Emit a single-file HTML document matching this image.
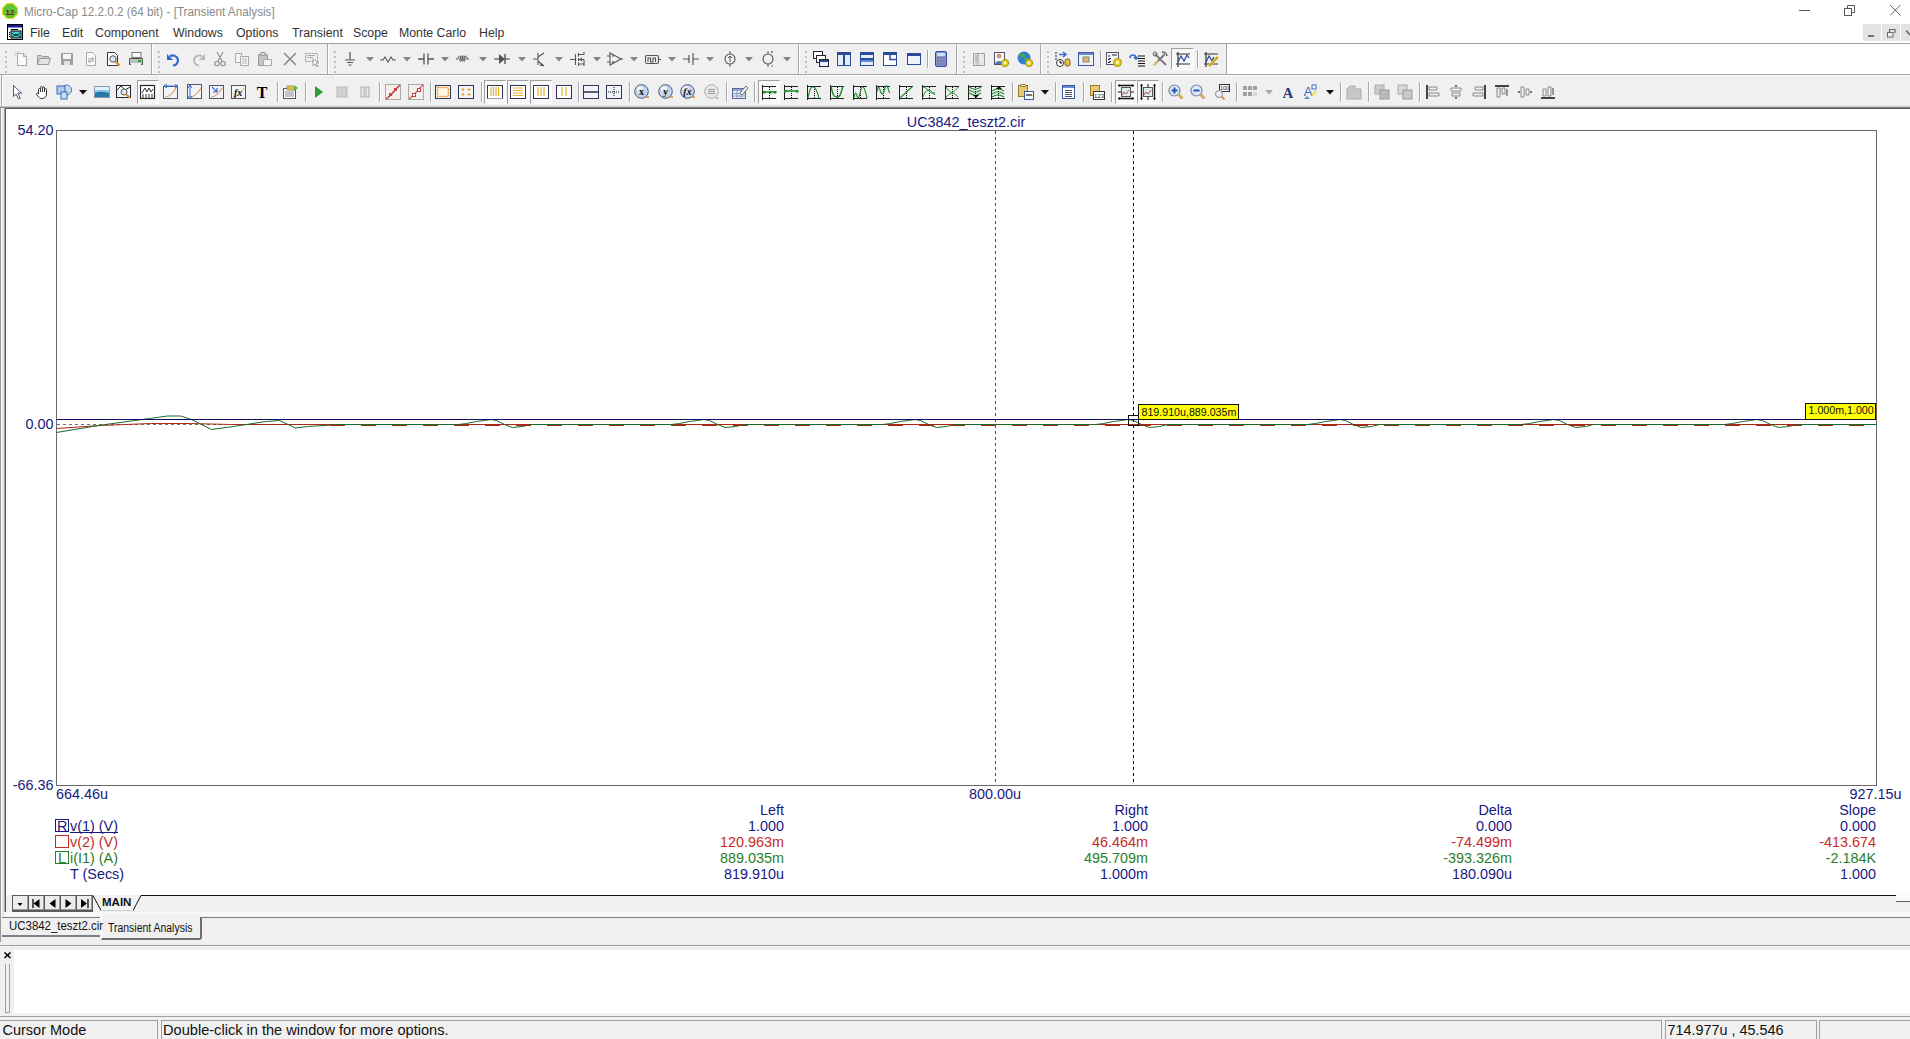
<!DOCTYPE html>
<html><head><meta charset="utf-8"><style>
html,body{margin:0;padding:0;width:1910px;height:1039px;overflow:hidden;background:#fff;position:relative;font-family:"Liberation Sans", sans-serif}
body>div,body>svg{position:absolute}
.t{white-space:nowrap;line-height:1;font-family:"Liberation Sans", sans-serif}
</style></head><body>
<svg style="left:2px;top:3px;" width="16" height="16" viewBox="0 0 16 16"><polygon points="5,0.5 11,0.5 15.5,5 15.5,11 11,15.5 5,15.5 0.5,11 0.5,5" fill="#5ac83a" stroke="#e8d820" stroke-width="1.2"/><text x="8" y="11.5" font-size="8" font-weight="bold" text-anchor="middle" fill="#7a1010" font-family="Liberation Sans">12</text></svg><div class="t" style="left:24px;top:5.59px;font-size:12.3px;color:#8a8a8a;font-weight:normal;transform:scaleX(0.952);transform-origin:0 0">Micro-Cap 12.2.0.2 (64 bit) - [Transient Analysis]</div><div style="left:1799px;top:10px;width:11px;height:1px;background:#5a5a5a"></div><svg style="left:1844px;top:5px;" width="12" height="12" viewBox="0 0 12 12"><rect x="0.5" y="3.5" width="7" height="7" fill="none" stroke="#5a5a5a"/><path d="M3.5 3.5V0.5h7v7h-3" fill="none" stroke="#5a5a5a"/></svg><svg style="left:1890px;top:5px;" width="11" height="11" viewBox="0 0 11 11"><path d="M0 0L10.5 10.5M10.5 0L0 10.5" stroke="#606060" stroke-width="1"/></svg><svg style="left:7px;top:24px;" width="16" height="16" viewBox="0 0 16 16"><rect x="0.5" y="0.5" width="15" height="15" fill="#fff" stroke="#000"/><rect x="1" y="1" width="14" height="2.5" fill="#1a1a9a"/><rect x="4" y="7" width="10" height="7" fill="#40d8d8" stroke="#000"/><path d="M5 9l4 3 4-3M5 13l4-3 4 3" stroke="#000" stroke-width="0.8" fill="none"/><rect x="4" y="5" width="7" height="1" fill="#000"/><rect x="2" y="8" width="1" height="1" fill="#000"/><rect x="2" y="10" width="1" height="1" fill="#000"/><rect x="2" y="12" width="1" height="1" fill="#000"/></svg><div class="t" style="left:30px;top:26.59px;font-size:12.3px;color:#333;font-weight:normal;">File</div><div class="t" style="left:62px;top:26.59px;font-size:12.3px;color:#333;font-weight:normal;">Edit</div><div class="t" style="left:95px;top:26.59px;font-size:12.3px;color:#333;font-weight:normal;">Component</div><div class="t" style="left:173px;top:26.59px;font-size:12.3px;color:#333;font-weight:normal;">Windows</div><div class="t" style="left:236px;top:26.59px;font-size:12.3px;color:#333;font-weight:normal;">Options</div><div class="t" style="left:292px;top:26.59px;font-size:12.3px;color:#333;font-weight:normal;">Transient</div><div class="t" style="left:353px;top:26.59px;font-size:12.3px;color:#333;font-weight:normal;">Scope</div><div class="t" style="left:399px;top:26.59px;font-size:12.3px;color:#333;font-weight:normal;">Monte Carlo</div><div class="t" style="left:479px;top:26.59px;font-size:12.3px;color:#333;font-weight:normal;">Help</div><div style="left:1863px;top:24px;width:18px;height:17px;background:#e3e3e3"></div><div style="left:1882px;top:24px;width:18px;height:17px;background:#e3e3e3"></div><div style="left:1901px;top:24px;width:9px;height:17px;background:#e3e3e3"></div><div style="left:1868px;top:35px;width:6px;height:2px;background:#707070"></div><svg style="left:1887px;top:29px;" width="9" height="9" viewBox="0 0 9 9"><rect x="0.5" y="3.5" width="5.5" height="4.5" fill="#eef" stroke="#6a6a6a"/><path d="M2.5 3V0.5h5.5v3.5" fill="none" stroke="#6a6a6a" stroke-width="1.2"/></svg><svg style="left:1906px;top:30px;" width="4" height="7" viewBox="0 0 4 7"><path d="M0 0.5L4 5" stroke="#6a6a6a" stroke-width="1.5"/></svg><div style="left:0px;top:43px;width:1910px;height:1px;background:#a0a0a0"></div><div style="left:0px;top:44px;width:1227px;height:30px;background:#f0f0f0"></div><div style="left:0px;top:74px;width:1910px;height:1px;background:#a8a8a8"></div><div style="left:0px;top:75px;width:1910px;height:32px;background:#f0f0f0"></div><div style="left:0px;top:75px;width:1910px;height:1px;background:#fafafa"></div><div style="left:0px;top:106px;width:1910px;height:1px;background:#c8c8c8"></div><div style="left:0px;top:107px;width:1910px;height:1px;background:#8a8a8a"></div><div style="left:1226px;top:44px;width:1px;height:30px;background:#a0a0a0"></div><div style="left:5px;top:51px;width:2px;height:2px;background:#c0c0c0"></div><div style="left:5px;top:56px;width:2px;height:2px;background:#c0c0c0"></div><div style="left:5px;top:61px;width:2px;height:2px;background:#c0c0c0"></div><div style="left:5px;top:66px;width:2px;height:2px;background:#c0c0c0"></div><div style="left:5px;top:71px;width:2px;height:2px;background:#c0c0c0"></div><svg style="left:14px;top:51px;" width="16" height="16" viewBox="0 0 16 16"><path d="M3.5 2.5h6l3 3v9h-9z" fill="#fafafa" stroke="#a8a8a8"/><path d="M9.5 2.5v3h3" fill="none" stroke="#a8a8a8"/><path d="M1 1l2 2M4 0v2M0 4h2" stroke="#c0c0c0"/></svg><svg style="left:36px;top:51px;" width="16" height="16" viewBox="0 0 16 16"><path d="M1.5 4.5h4l1 1h6v8h-11z" fill="#d0d0d0" stroke="#9a9a9a"/><path d="M1.5 13.5l2-6h11l-2 6z" fill="#e4e4e4" stroke="#9a9a9a"/></svg><svg style="left:59px;top:51px;" width="16" height="16" viewBox="0 0 16 16"><rect x="2" y="2" width="12" height="12" fill="#a0a0a0"/><rect x="4" y="3" width="8" height="5" fill="#f4f4f4"/><rect x="5" y="10" width="6" height="4" fill="#e0e0e0"/></svg><svg style="left:83px;top:51px;" width="16" height="16" viewBox="0 0 16 16"><path d="M3.5 1.5h6l3 3v10h-9z" fill="#fafafa" stroke="#a8a8a8"/><path d="M5 8h6l-2-2M11 10H5l2 2" fill="none" stroke="#9a9a9a"/></svg><svg style="left:105px;top:51px;" width="16" height="16" viewBox="0 0 16 16"><path d="M2.5 1.5h7l3 3v10h-10z" fill="#fff" stroke="#333"/><circle cx="8" cy="8" r="3.2" fill="#dfe8f4" stroke="#555"/><path d="M10.5 10.5l4 4" stroke="#d08a30" stroke-width="2.2"/></svg><svg style="left:128px;top:51px;" width="16" height="16" viewBox="0 0 16 16"><rect x="4" y="1.5" width="9" height="5" fill="#fff" stroke="#777"/><path d="M1.5 7.5h13v6h-13z" fill="#b8c0c8" stroke="#555"/><rect x="10" y="9" width="3" height="2" fill="#20b020"/><rect x="3" y="12" width="10" height="2" fill="#eee"/></svg><div style="left:151px;top:44px;width:1px;height:30px;background:#a8a8a8"></div><div style="left:152px;top:44px;width:1px;height:30px;background:#ffffff"></div><div style="left:158px;top:51px;width:2px;height:2px;background:#c0c0c0"></div><div style="left:158px;top:56px;width:2px;height:2px;background:#c0c0c0"></div><div style="left:158px;top:61px;width:2px;height:2px;background:#c0c0c0"></div><div style="left:158px;top:66px;width:2px;height:2px;background:#c0c0c0"></div><div style="left:158px;top:71px;width:2px;height:2px;background:#c0c0c0"></div><svg style="left:166px;top:51px;" width="16" height="16" viewBox="0 0 16 16"><path d="M4 5.5a5 5 0 1 1 3 9" fill="none" stroke="#2a6ad0" stroke-width="2.2"/><path d="M1 3v6h6z" fill="#2a6ad0"/></svg><svg style="left:190px;top:51px;" width="16" height="16" viewBox="0 0 16 16"><path d="M12 5.5a5 5 0 1 0 -3 9" fill="none" stroke="#b8b8b8" stroke-width="2"/><path d="M15 3v6h-6z" fill="#b8b8b8"/></svg><svg style="left:212px;top:51px;" width="16" height="16" viewBox="0 0 16 16"><path d="M5 1l5 9M11 1l-5 9" stroke="#9a9a9a" stroke-width="1.3"/><circle cx="5" cy="12.5" r="2.2" fill="none" stroke="#9a9a9a" stroke-width="1.3"/><circle cx="11" cy="12.5" r="2.2" fill="none" stroke="#9a9a9a" stroke-width="1.3"/></svg><svg style="left:234px;top:51px;" width="16" height="16" viewBox="0 0 16 16"><path d="M1.5 2.5h6v9h-6z" fill="#f4f4f4" stroke="#aaa"/><path d="M6.5 5.5h8v9h-8z" fill="#f4f4f4" stroke="#aaa"/><path d="M8 8h5M8 10h5M8 12h5" stroke="#bbb"/></svg><svg style="left:257px;top:51px;" width="16" height="16" viewBox="0 0 16 16"><path d="M1.5 3.5h9v11h-9z" fill="#c4c4c4" stroke="#999"/><rect x="4" y="1.5" width="4" height="3" fill="#ddd" stroke="#999"/><path d="M6.5 8.5h8v6h-8z" fill="#f4f4f4" stroke="#aaa"/></svg><svg style="left:282px;top:51px;" width="16" height="16" viewBox="0 0 16 16"><path d="M2 2l12 12M14 2L2 14" stroke="#8a8a8a" stroke-width="1.6"/></svg><svg style="left:304px;top:51px;" width="16" height="16" viewBox="0 0 16 16"><path d="M1.5 2.5h12v8h-12z" fill="none" stroke="#999" stroke-dasharray="2 1"/><path d="M3 4.5h8M3 6.5h6" stroke="#aaa"/><path d="M9 8v7l2-2 2 3 1-1-2-3h3z" fill="#fff" stroke="#888" stroke-width="0.8"/></svg><div style="left:327px;top:44px;width:1px;height:30px;background:#a8a8a8"></div><div style="left:328px;top:44px;width:1px;height:30px;background:#ffffff"></div><div style="left:334px;top:51px;width:2px;height:2px;background:#c0c0c0"></div><div style="left:334px;top:56px;width:2px;height:2px;background:#c0c0c0"></div><div style="left:334px;top:61px;width:2px;height:2px;background:#c0c0c0"></div><div style="left:334px;top:66px;width:2px;height:2px;background:#c0c0c0"></div><div style="left:334px;top:71px;width:2px;height:2px;background:#c0c0c0"></div><svg style="left:342px;top:51px;" width="16" height="16" viewBox="0 0 16 16"><path d="M8 1v8M3 9h10M5 11.5h6M6.5 14h3" stroke="#555" stroke-width="1.2"/></svg><svg style="left:366px;top:57px;" width="8" height="5" viewBox="0 0 8 5"><path d="M0 0h8L4 4.5z" fill="#888"/></svg><svg style="left:380px;top:51px;" width="16" height="16" viewBox="0 0 16 16"><path d="M0 9h3l2-3 3 5 3-5 2 3h3" fill="none" stroke="#555" stroke-width="1.1"/></svg><svg style="left:403px;top:57px;" width="8" height="5" viewBox="0 0 8 5"><path d="M0 0h8L4 4.5z" fill="#888"/></svg><svg style="left:418px;top:51px;" width="16" height="16" viewBox="0 0 16 16"><path d="M0 8h6M10 8h6M6 2.5v11M10 2.5v11" stroke="#555" stroke-width="1.3"/></svg><svg style="left:441px;top:57px;" width="8" height="5" viewBox="0 0 8 5"><path d="M0 0h8L4 4.5z" fill="#888"/></svg><svg style="left:456px;top:51px;" width="16" height="16" viewBox="0 0 16 16"><path d="M0 8h2c0-4 3-4 3 0s-2 2-1 0c0-4 3-4 3 0s-2 2-1 0c0-4 3-4 3 0s-2 2-1 0c0-4 3-4 3 0h2" fill="none" stroke="#555" stroke-width="1"/></svg><svg style="left:479px;top:57px;" width="8" height="5" viewBox="0 0 8 5"><path d="M0 0h8L4 4.5z" fill="#888"/></svg><svg style="left:494px;top:51px;" width="16" height="16" viewBox="0 0 16 16"><path d="M0 8h16" stroke="#555" stroke-width="1.2"/><path d="M5 3v10l6-5z" fill="#555"/><path d="M11 3v10" stroke="#555" stroke-width="1.4"/></svg><svg style="left:518px;top:57px;" width="8" height="5" viewBox="0 0 8 5"><path d="M0 0h8L4 4.5z" fill="#888"/></svg><svg style="left:532px;top:51px;" width="16" height="16" viewBox="0 0 16 16"><path d="M1 8h5M6 2v12M6 6l6-4M6 10l6 5" stroke="#555" stroke-width="1.1"/><path d="M9 12l3 3-4 0z" fill="#555"/></svg><svg style="left:555px;top:57px;" width="8" height="5" viewBox="0 0 8 5"><path d="M0 0h8L4 4.5z" fill="#888"/></svg><svg style="left:570px;top:51px;" width="16" height="16" viewBox="0 0 16 16"><path d="M0 8.5h5M5.5 3v11M8.5 2v3.5M8.5 7v3M8.5 11.5v3.5M8.5 3.5h5.5M8.5 8.5h5.5M8.5 13h5.5M14 1v2.5M14 13v2M14 8.5v4.5" stroke="#555" stroke-width="1.1"/><path d="M9 8.5l3-2v4z" fill="#555"/></svg><svg style="left:593px;top:57px;" width="8" height="5" viewBox="0 0 8 5"><path d="M0 0h8L4 4.5z" fill="#888"/></svg><svg style="left:607px;top:51px;" width="16" height="16" viewBox="0 0 16 16"><path d="M3 2v12l11-6z" fill="none" stroke="#555" stroke-width="1.1"/><path d="M0 5h3M0 11h3M14 8h2M5 5h2M6 10v2M5 11h2" stroke="#555"/></svg><svg style="left:630px;top:57px;" width="8" height="5" viewBox="0 0 8 5"><path d="M0 0h8L4 4.5z" fill="#888"/></svg><svg style="left:645px;top:51px;" width="16" height="16" viewBox="0 0 16 16"><rect x="0.5" y="4.5" width="13" height="8" rx="1.5" fill="none" stroke="#555" stroke-width="1.1"/><path d="M3 11V7h2.5v4h2.5V7h2.5v4" fill="none" stroke="#555" stroke-width="1.1"/><path d="M13.5 8.5h2.5" stroke="#555"/></svg><svg style="left:668px;top:57px;" width="8" height="5" viewBox="0 0 8 5"><path d="M0 0h8L4 4.5z" fill="#888"/></svg><svg style="left:683px;top:51px;" width="16" height="16" viewBox="0 0 16 16"><path d="M0 8h6M10 8h6M6 4v8M10 2v12" stroke="#555" stroke-width="1.2"/></svg><svg style="left:706px;top:57px;" width="8" height="5" viewBox="0 0 8 5"><path d="M0 0h8L4 4.5z" fill="#888"/></svg><svg style="left:722px;top:51px;" width="16" height="16" viewBox="0 0 16 16"><circle cx="8" cy="8" r="5" fill="none" stroke="#555" stroke-width="1.1"/><path d="M8 0v3M8 13v3M8 11V5M6 7l2-2 2 2" fill="none" stroke="#555"/></svg><svg style="left:745px;top:57px;" width="8" height="5" viewBox="0 0 8 5"><path d="M0 0h8L4 4.5z" fill="#888"/></svg><svg style="left:760px;top:51px;" width="16" height="16" viewBox="0 0 16 16"><circle cx="8" cy="8" r="5" fill="none" stroke="#555" stroke-width="1.1"/><path d="M8 0v3M8 13v3" stroke="#555"/><path d="M11 1h2M12 0v2M11 15h2" stroke="#555" stroke-width="0.8"/></svg><svg style="left:783px;top:57px;" width="8" height="5" viewBox="0 0 8 5"><path d="M0 0h8L4 4.5z" fill="#888"/></svg><div style="left:798px;top:44px;width:1px;height:30px;background:#a8a8a8"></div><div style="left:799px;top:44px;width:1px;height:30px;background:#ffffff"></div><div style="left:805px;top:51px;width:2px;height:2px;background:#c0c0c0"></div><div style="left:805px;top:56px;width:2px;height:2px;background:#c0c0c0"></div><div style="left:805px;top:61px;width:2px;height:2px;background:#c0c0c0"></div><div style="left:805px;top:66px;width:2px;height:2px;background:#c0c0c0"></div><div style="left:805px;top:71px;width:2px;height:2px;background:#c0c0c0"></div><svg style="left:813px;top:51px;" width="16" height="16" viewBox="0 0 16 16"><rect x="0.5" y="0.5" width="9" height="7" fill="#fff" stroke="#223"/><rect x="3.5" y="4.5" width="9" height="7" fill="#fff" stroke="#223"/><rect x="6.5" y="8.5" width="9" height="7" fill="#eef" stroke="#223"/><rect x="7" y="9" width="8" height="2" fill="#2a4a9a"/></svg><svg style="left:836px;top:51px;" width="16" height="16" viewBox="0 0 16 16"><rect x="1.5" y="1.5" width="13" height="13" fill="#e8eef8" stroke="#2a4a9a"/><path d="M8 1.5v13" stroke="#2a4a9a" stroke-width="2"/><rect x="2" y="2" width="12" height="2" fill="#2a4a9a"/></svg><svg style="left:859px;top:51px;" width="16" height="16" viewBox="0 0 16 16"><rect x="1.5" y="1.5" width="13" height="13" fill="#e8eef8" stroke="#2a4a9a"/><path d="M1.5 8h13" stroke="#2a4a9a" stroke-width="2"/><rect x="2" y="2" width="12" height="2" fill="#2a4a9a"/><rect x="2" y="9" width="12" height="2" fill="#5a8ad8"/></svg><svg style="left:882px;top:51px;" width="16" height="16" viewBox="0 0 16 16"><rect x="1.5" y="1.5" width="13" height="13" fill="#fff" stroke="#2a4a9a"/><path d="M8 1.5v7h6.5" fill="none" stroke="#2a4a9a" stroke-width="1.5"/><rect x="2" y="2" width="12" height="2" fill="#2a4a9a"/></svg><svg style="left:906px;top:51px;" width="16" height="16" viewBox="0 0 16 16"><rect x="1.5" y="2.5" width="13" height="11" fill="#eef2fa" stroke="#2a4a9a"/><rect x="2" y="3" width="12" height="2" fill="#2a4a9a"/></svg><div style="left:927px;top:50px;width:1px;height:18px;background:#a8a8a8"></div><div style="left:928px;top:50px;width:1px;height:18px;background:#ffffff"></div><svg style="left:933px;top:51px;" width="16" height="16" viewBox="0 0 16 16"><rect x="2.5" y="0.5" width="11" height="15" rx="1.5" fill="#7a9ad8" stroke="#34a"/><rect x="4" y="2" width="8" height="3" fill="#cde"/><path d="M4.5 7h1M7.5 7h1M10.5 7h1M4.5 10h1M7.5 10h1M10.5 10h1M4.5 13h1M7.5 13h1M10.5 13h1" stroke="#c02020" stroke-width="1.5"/></svg><div style="left:956px;top:44px;width:1px;height:30px;background:#a8a8a8"></div><div style="left:957px;top:44px;width:1px;height:30px;background:#ffffff"></div><div style="left:963px;top:51px;width:2px;height:2px;background:#c0c0c0"></div><div style="left:963px;top:56px;width:2px;height:2px;background:#c0c0c0"></div><div style="left:963px;top:61px;width:2px;height:2px;background:#c0c0c0"></div><div style="left:963px;top:66px;width:2px;height:2px;background:#c0c0c0"></div><div style="left:963px;top:71px;width:2px;height:2px;background:#c0c0c0"></div><svg style="left:971px;top:51px;" width="16" height="16" viewBox="0 0 16 16"><rect x="2.5" y="2.5" width="11" height="12" fill="#e8e8e8" stroke="#a0a0a0"/><path d="M7 2.5v12M4 5h2M4 7h2M4 9h2M4 11h2" stroke="#999"/></svg><svg style="left:993px;top:51px;" width="16" height="16" viewBox="0 0 16 16"><rect x="1.5" y="1.5" width="10" height="12" fill="#fff" stroke="#556"/><circle cx="6" cy="5" r="2.5" fill="#c9a07a"/><path d="M2 13c0-4 8-4 8 0" fill="#5577bb"/><circle cx="12" cy="12" r="3.6" fill="#e8d020" stroke="#a09010"/><circle cx="12" cy="12" r="1.2" fill="#fff"/></svg><svg style="left:1017px;top:51px;" width="16" height="16" viewBox="0 0 16 16"><circle cx="7" cy="7" r="6.5" fill="#2f7fd0"/><path d="M2 5c2-3 5-3 6-1s-2 3 0 5 3-2 5-1" fill="#4cb040"/><circle cx="12" cy="12" r="3.6" fill="#e8d020" stroke="#a09010"/><circle cx="12" cy="12" r="1.2" fill="#fff"/></svg><div style="left:1040px;top:44px;width:1px;height:30px;background:#a8a8a8"></div><div style="left:1041px;top:44px;width:1px;height:30px;background:#ffffff"></div><div style="left:1047px;top:51px;width:2px;height:2px;background:#c0c0c0"></div><div style="left:1047px;top:56px;width:2px;height:2px;background:#c0c0c0"></div><div style="left:1047px;top:61px;width:2px;height:2px;background:#c0c0c0"></div><div style="left:1047px;top:66px;width:2px;height:2px;background:#c0c0c0"></div><div style="left:1047px;top:71px;width:2px;height:2px;background:#c0c0c0"></div><svg style="left:1055px;top:51px;" width="16" height="16" viewBox="0 0 16 16"><path d="M0 2h2M0 5h2M0 8h2" stroke="#223" stroke-width="1.2"/><path d="M4 3.5h6M8 1l3 2.5-3 2.5" fill="none" stroke="#3a6ad0" stroke-width="1.6"/><circle cx="5" cy="12" r="3.5" fill="#fff" stroke="#333"/><path d="M5 10v2h2" stroke="#333"/><rect x="10" y="8" width="5" height="7" rx="2" fill="#e8c040" stroke="#776020"/></svg><svg style="left:1078px;top:51px;" width="16" height="16" viewBox="0 0 16 16"><rect x="0.5" y="1.5" width="15" height="13" fill="#eef3fa" stroke="#3a5aa0"/><rect x="1" y="2" width="14" height="2" fill="#6a8ad0"/><rect x="5" y="6" width="6" height="5" fill="#e8b070" stroke="#886"/></svg><div style="left:1100px;top:50px;width:1px;height:18px;background:#a8a8a8"></div><div style="left:1101px;top:50px;width:1px;height:18px;background:#ffffff"></div><svg style="left:1106px;top:51px;" width="16" height="16" viewBox="0 0 16 16"><rect x="0.5" y="1.5" width="12" height="12" fill="#f4f4f4" stroke="#556"/><path d="M2 5h2M2 8l1 1 2-2M2 11l1 1 2-2M6 4h5" stroke="#223"/><circle cx="11.5" cy="11.5" r="4" fill="#e8d020" stroke="#a09010"/><circle cx="11.5" cy="11.5" r="1.3" fill="#fff"/></svg><svg style="left:1129px;top:51px;" width="16" height="16" viewBox="0 0 16 16"><path d="M1 7c0-4 6-4 6 0M5 6l2 2 2-2" fill="none" stroke="#3a6ad0" stroke-width="1.6"/><path d="M9 5h7M9 7.5h7M9 10h7M9 12.5h7M9 15h7" stroke="#111" stroke-width="1.2"/></svg><svg style="left:1152px;top:51px;" width="16" height="16" viewBox="0 0 16 16"><path d="M2 14L13 3M14 14L3 3" stroke="#777" stroke-width="1.8"/><path d="M2 14l4-4" stroke="#d8c060" stroke-width="2.2"/><circle cx="3" cy="3" r="2" fill="none" stroke="#666"/><path d="M10 1c3 0 5 2 5 4" stroke="#666" fill="none" stroke-width="1.5"/></svg><div style="left:1171px;top:48px;width:23px;height:22px;background:#f8f8f8;border-top:1px solid #a0a0a0;border-left:1px solid #a0a0a0;border-right:1px solid #fff;border-bottom:1px solid #fff;box-sizing:border-box"></div><svg style="left:1175px;top:51px;" width="16" height="16" viewBox="0 0 16 16"><path d="M3 1v15M1 3h14M1 13h14" stroke="#333" stroke-width="1.2"/><path d="M3 11l3-6 3 5 3-6 2 3" fill="none" stroke="#2a4a9a" stroke-width="1.3"/></svg><div style="left:1197px;top:50px;width:1px;height:18px;background:#a8a8a8"></div><div style="left:1198px;top:50px;width:1px;height:18px;background:#ffffff"></div><svg style="left:1203px;top:51px;" width="16" height="16" viewBox="0 0 16 16"><path d="M3 1v15M1 3h14M1 13h14" stroke="#333" stroke-width="1.2"/><path d="M3 11l3-6 3 5 2-4" fill="none" stroke="#2a4a9a" stroke-width="1.3"/><path d="M6 15l9-9" stroke="#e8c040" stroke-width="3"/><path d="M6 15l9-9" stroke="#886020" stroke-width="0.6"/></svg><div style="left:1px;top:75px;width:1px;height:32px;background:#a8a8a8"></div><div style="left:2px;top:76px;width:1px;height:30px;background:#fff"></div><svg style="left:10px;top:84px;" width="16" height="16" viewBox="0 0 16 16"><path d="M3.5 1.5v11l2.5-2.5 2.5 5 1.8-0.9-2.5-5h3.7z" fill="#fff" stroke="#3a4a6a" stroke-width="0.9"/></svg><svg style="left:34px;top:84px;" width="16" height="16" viewBox="0 0 16 16"><path d="M4.5 10V5.5a1 1 0 0 1 2 0V8V3.5a1 1 0 0 1 2 0V8V4a1 1 0 0 1 2 0v4V5.5a1 1 0 0 1 2 0V10c0 2.8-2 4.5-4.5 4.5c-2 0-3.2-1.2-4-2.5L2.5 10.5c-0.5-1 0.8-1.8 2-0.5z" fill="#fff" stroke="#333" stroke-width="1"/></svg><svg style="left:56px;top:84px;" width="16" height="16" viewBox="0 0 16 16"><circle cx="10.5" cy="6" r="5" fill="#c8def2" stroke="#4a7ab8"/><rect x="1" y="2" width="8" height="8" fill="#a8cdf0" stroke="#3a6ab0"/><rect x="5" y="8" width="6" height="7" fill="#c8def2" stroke="#3a6ab0"/></svg><svg style="left:79px;top:90px;" width="8" height="5" viewBox="0 0 8 5"><path d="M0 0h8L4 4.5z" fill="#111"/></svg><svg style="left:94px;top:84px;" width="16" height="16" viewBox="0 0 16 16"><rect x="0.5" y="2.5" width="15" height="11" fill="#dff0fa" stroke="#8a9ab0"/><rect x="1" y="6" width="14" height="3" fill="#8ccae8"/><path d="M1 9c4-2 9-1 14 0v4H1z" fill="#2a78a8"/></svg><svg style="left:116px;top:84px;" width="16" height="16" viewBox="0 0 16 16"><rect x="0.5" y="1.5" width="14" height="12" fill="#f4f8fc" stroke="#223"/><path d="M1 6l4-4 4 4 5-3" fill="none" stroke="#333"/><circle cx="8" cy="8" r="3" fill="#dde8f4" stroke="#555"/><path d="M10 10l4 4" stroke="#d08a30" stroke-width="2"/></svg><div style="left:137px;top:80px;width:22px;height:24px;background:#f8f8f8;border-top:1px solid #a0a0a0;border-left:1px solid #a0a0a0;border-right:1px solid #fff;border-bottom:1px solid #fff;box-sizing:border-box"></div><svg style="left:140px;top:84px;" width="16" height="16" viewBox="0 0 16 16"><rect x="0.5" y="1.5" width="14" height="13" fill="#fff" stroke="#223" stroke-width="1.2"/><path d="M2 9l3-5 2 4 2-4 2 4 2-3" fill="none" stroke="#333"/><path d="M2 11h11M2 13h11" stroke="#333" stroke-dasharray="2 1"/></svg><svg style="left:163px;top:84px;" width="16" height="16" viewBox="0 0 16 16"><rect x="0.5" y="2.5" width="14" height="12" fill="#f0f4fa" stroke="#556"/><path d="M2 13c4 0 8-4 11-9" fill="none" stroke="#e8a050" stroke-width="1.2"/><path d="M1 2h14M1 2l3-2M1 2l3 2M15 2l-3-2M15 2l-3 2" stroke="#3a6ad0" stroke-width="1"/></svg><svg style="left:186px;top:84px;" width="16" height="16" viewBox="0 0 16 16"><rect x="1.5" y="0.5" width="14" height="14" fill="#f0f4fa" stroke="#556"/><path d="M4 13c4 0 8-4 11-9" fill="none" stroke="#e8a050" stroke-width="1.2"/><path d="M4 1v14M4 1l-2 3M4 1l2 3M4 15l-2-3M4 15l2-3" stroke="#3a6ad0" stroke-width="1"/></svg><svg style="left:209px;top:84px;" width="16" height="16" viewBox="0 0 16 16"><rect x="0.5" y="1.5" width="14" height="13" fill="#f0f4fa" stroke="#556"/><path d="M2 13c4 0 8-4 11-9" fill="none" stroke="#e8a050" stroke-width="1.2"/><path d="M3 3l5 5M8 4v4H4" fill="none" stroke="#3a6ad0" stroke-width="1.2"/></svg><svg style="left:231px;top:84px;" width="16" height="16" viewBox="0 0 16 16"><rect x="0.5" y="1.5" width="14" height="13" fill="#f4f4f4" stroke="#556"/><path d="M2 13c4 0 8-4 11-9" fill="none" stroke="#e8a050" stroke-width="1"/><text x="3" y="12" font-size="10" font-style="italic" font-weight="bold" font-family="Liberation Serif" fill="#111">fx</text></svg><svg style="left:254px;top:84px;" width="16" height="16" viewBox="0 0 16 16"><text x="8" y="14" font-size="16" font-weight="bold" text-anchor="middle" font-family="Liberation Serif" fill="#000">T</text></svg><div style="left:277px;top:82px;width:1px;height:20px;background:#a8a8a8"></div><div style="left:278px;top:82px;width:1px;height:20px;background:#ffffff"></div><svg style="left:283px;top:84px;" width="16" height="16" viewBox="0 0 16 16"><rect x="0.5" y="4.5" width="12" height="10" fill="#fff" stroke="#555"/><path d="M2 8h9M2 10h9M2 12h9" stroke="#889"/><path d="M4 2h7l2 2-2 2H4z" fill="#e0c040" stroke="#997"/><path d="M11 1l4 3-4 3z" fill="#6ab040"/></svg><div style="left:305px;top:82px;width:1px;height:20px;background:#a8a8a8"></div><div style="left:306px;top:82px;width:1px;height:20px;background:#ffffff"></div><svg style="left:311px;top:84px;" width="16" height="16" viewBox="0 0 16 16"><path d="M4 2v12l8-6z" fill="#2a9a3a"/></svg><svg style="left:334px;top:84px;" width="16" height="16" viewBox="0 0 16 16"><rect x="3" y="3" width="10" height="10" fill="#d0d0d0" stroke="#bbb"/></svg><svg style="left:357px;top:84px;" width="16" height="16" viewBox="0 0 16 16"><rect x="4" y="3" width="3" height="10" fill="#eee" stroke="#aaa"/><rect x="9" y="3" width="3" height="10" fill="#eee" stroke="#aaa"/></svg><div style="left:379px;top:82px;width:1px;height:20px;background:#a8a8a8"></div><div style="left:380px;top:82px;width:1px;height:20px;background:#ffffff"></div><svg style="left:385px;top:84px;" width="16" height="16" viewBox="0 0 16 16"><rect x="0.5" y="0.5" width="15" height="15" fill="#f4eeec" stroke="#aaa"/><path d="M1 15l5-4 4-5 5-5" stroke="#c84040" stroke-width="1.5"/><rect x="4" y="9" width="3" height="3" fill="#c84040"/><rect x="9" y="4" width="3" height="3" fill="#c84040"/></svg><svg style="left:408px;top:84px;" width="16" height="16" viewBox="0 0 16 16"><rect x="0.5" y="0.5" width="15" height="15" fill="#f4eeec" stroke="#aaa"/><path d="M1 15l5-4 4-5 5-5" stroke="#c86060" stroke-width="1.2"/><rect x="4.5" y="9.5" width="3" height="3" fill="#fff" stroke="#c84040"/><rect x="9.5" y="4.5" width="3" height="3" fill="#fff" stroke="#c84040"/></svg><div style="left:430px;top:82px;width:1px;height:20px;background:#a8a8a8"></div><div style="left:431px;top:82px;width:1px;height:20px;background:#ffffff"></div><svg style="left:435px;top:84px;" width="16" height="16" viewBox="0 0 16 16"><rect x="0.5" y="1.5" width="15" height="13" fill="#fff" stroke="#335"/><rect x="2.5" y="3.5" width="11" height="9" fill="#fff8e8" stroke="#e89020" stroke-width="1.5" stroke-dasharray="2 1"/></svg><svg style="left:458px;top:84px;" width="16" height="16" viewBox="0 0 16 16"><rect x="0.5" y="1.5" width="15" height="13" fill="#f0f4fa" stroke="#335"/><path d="M5 4v3M3.5 5.5h3M11 4v3M9.5 5.5h3M5 9v3M3.5 10.5h3M11 9v3M9.5 10.5h3" stroke="#e8a020"/></svg><div style="left:481px;top:82px;width:1px;height:20px;background:#a8a8a8"></div><div style="left:482px;top:82px;width:1px;height:20px;background:#ffffff"></div><div style="left:484px;top:80px;width:22px;height:24px;background:#f8f8f8;border-top:1px solid #a0a0a0;border-left:1px solid #a0a0a0;border-right:1px solid #fff;border-bottom:1px solid #fff;box-sizing:border-box"></div><div style="left:507px;top:80px;width:22px;height:24px;background:#f8f8f8;border-top:1px solid #a0a0a0;border-left:1px solid #a0a0a0;border-right:1px solid #fff;border-bottom:1px solid #fff;box-sizing:border-box"></div><div style="left:530px;top:80px;width:22px;height:24px;background:#f8f8f8;border-top:1px solid #a0a0a0;border-left:1px solid #a0a0a0;border-right:1px solid #fff;border-bottom:1px solid #fff;box-sizing:border-box"></div><svg style="left:487px;top:84px;" width="16" height="16" viewBox="0 0 16 16"><rect x="0.5" y="1.5" width="15" height="13" fill="#fff" stroke="#335"/><path d="M4 3v9M6.5 3v9M9 3v9M11.5 3v9" stroke="#e8b030" stroke-width="1.2"/><path d="M0.5 14.5h15" stroke="#8aa"/></svg><svg style="left:510px;top:84px;" width="16" height="16" viewBox="0 0 16 16"><rect x="0.5" y="1.5" width="15" height="13" fill="#fff" stroke="#335"/><path d="M3 4h10M3 6.5h10M3 9h10M3 11.5h10" stroke="#e8b030" stroke-width="1.2"/></svg><svg style="left:533px;top:84px;" width="16" height="16" viewBox="0 0 16 16"><rect x="0.5" y="1.5" width="15" height="13" fill="#fff" stroke="#335"/><path d="M5 3v9M8 3v9M11 3v9" stroke="#e8b030" stroke-width="1.2"/></svg><svg style="left:556px;top:84px;" width="16" height="16" viewBox="0 0 16 16"><rect x="0.5" y="1.5" width="15" height="13" fill="#fff" stroke="#335"/><path d="M6 3v9M10 3v9" stroke="#e8b030" stroke-width="1.2"/></svg><div style="left:578px;top:82px;width:1px;height:20px;background:#a8a8a8"></div><div style="left:579px;top:82px;width:1px;height:20px;background:#ffffff"></div><svg style="left:583px;top:84px;" width="16" height="16" viewBox="0 0 16 16"><rect x="0.5" y="1.5" width="15" height="13" fill="#f0f4fa" stroke="#335"/><path d="M1 8h14" stroke="#111" stroke-width="1.3"/></svg><svg style="left:606px;top:84px;" width="16" height="16" viewBox="0 0 16 16"><rect x="0.5" y="1.5" width="15" height="13" fill="#f0f4fa" stroke="#335"/><path d="M8 3v10M2 8h12" stroke="#111" stroke-dasharray="1 1"/></svg><div style="left:629px;top:82px;width:1px;height:20px;background:#a8a8a8"></div><div style="left:630px;top:82px;width:1px;height:20px;background:#ffffff"></div><svg style="left:634px;top:84px;" width="16" height="16" viewBox="0 0 16 16"><circle cx="7.5" cy="7.5" r="6.8" fill="#c4d4ec" stroke="#4a5a7a"/><circle cx="6" cy="5" r="3" fill="#eef4fc"/><text x="7.5" y="11" font-size="10" font-weight="bold"  text-anchor="middle" font-family="Liberation Serif" fill="#111">x</text><path d="M12 13h3" stroke="#d08a30" stroke-width="1.5"/></svg><svg style="left:658px;top:84px;" width="16" height="16" viewBox="0 0 16 16"><circle cx="7.5" cy="7.5" r="6.8" fill="#c4d4ec" stroke="#4a5a7a"/><circle cx="6" cy="5" r="3" fill="#eef4fc"/><text x="7.5" y="11" font-size="10" font-weight="bold"  text-anchor="middle" font-family="Liberation Serif" fill="#111">y</text><path d="M12 13h3" stroke="#d08a30" stroke-width="1.5"/></svg><svg style="left:680px;top:84px;" width="16" height="16" viewBox="0 0 16 16"><circle cx="7.5" cy="7.5" r="6.8" fill="#c4d4ec" stroke="#4a5a7a"/><circle cx="6" cy="5" r="3" fill="#eef4fc"/><text x="7.5" y="11" font-size="10" font-weight="bold" font-style="italic" text-anchor="middle" font-family="Liberation Serif" fill="#111">fx</text><path d="M12 13h3" stroke="#d08a30" stroke-width="1.5"/></svg><svg style="left:704px;top:84px;" width="16" height="16" viewBox="0 0 16 16"><circle cx="7.5" cy="7.5" r="6.8" fill="#e8e8e8" stroke="#aaa"/><path d="M4 5.5h7M4 7.5h7M4 9.5h7" stroke="#999"/><path d="M12 13l2 2" stroke="#aaa" stroke-width="1.5"/></svg><div style="left:726px;top:82px;width:1px;height:20px;background:#a8a8a8"></div><div style="left:727px;top:82px;width:1px;height:20px;background:#ffffff"></div><svg style="left:732px;top:84px;" width="16" height="16" viewBox="0 0 16 16"><rect x="0.5" y="4.5" width="13" height="10" fill="#e8eefa" stroke="#5a6a9a"/><rect x="1" y="5" width="12" height="2" fill="#8aa8d8"/><path d="M5 5v9M9 5v9M1 9.5h12M1 12h12" stroke="#8a9aba"/><path d="M8 9l6-7 2 2-6 7z" fill="#fff" stroke="#667"/></svg><div style="left:754px;top:82px;width:1px;height:20px;background:#a8a8a8"></div><div style="left:755px;top:82px;width:1px;height:20px;background:#ffffff"></div><div style="left:758px;top:80px;width:22px;height:24px;background:#f8f8f8;border-top:1px solid #a0a0a0;border-left:1px solid #a0a0a0;border-right:1px solid #fff;border-bottom:1px solid #fff;box-sizing:border-box"></div><svg style="left:761px;top:84px;" width="16" height="16" viewBox="0 0 16 16"><path d="M1.5 1v15M1 2.5h14M1 14.5h14" stroke="#222" stroke-width="1"/><path d="M8.5 3v11" stroke="#000" stroke-dasharray="1 1"/><path d="M2 8h13" stroke="#1a8a2a" stroke-width="1.5"/><rect x="2" y="7" width="2.5" height="2.5" fill="#1a8a2a"/><rect x="8" y="7" width="2.5" height="2.5" fill="#1a8a2a"/><rect x="13" y="7" width="2.5" height="2.5" fill="#1a8a2a"/></svg><svg style="left:783px;top:84px;" width="16" height="16" viewBox="0 0 16 16"><path d="M1.5 1v15M1 2.5h14M1 14.5h14" stroke="#222" stroke-width="1"/><path d="M8.5 3v11" stroke="#000" stroke-dasharray="1 1"/><path d="M2 7h13" stroke="#1a8a2a" stroke-width="1.5"/><rect x="1" y="6" width="2.5" height="2.5" fill="#1a8a2a"/><rect x="13" y="6" width="2.5" height="2.5" fill="#1a8a2a"/></svg><svg style="left:806px;top:84px;" width="16" height="16" viewBox="0 0 16 16"><path d="M1.5 1v15M1 2.5h14M1 14.5h14" stroke="#222" stroke-width="1"/><path d="M8.5 3v11" stroke="#000" stroke-dasharray="1 1"/><path d="M2 14c2-10 3-11 5-11s3 1 6 11" fill="none" stroke="#1a8a2a" stroke-width="1.1"/></svg><svg style="left:829px;top:84px;" width="16" height="16" viewBox="0 0 16 16"><path d="M1.5 1v15M1 2.5h14M1 14.5h14" stroke="#222" stroke-width="1"/><path d="M8.5 3v11" stroke="#000" stroke-dasharray="1 1"/><path d="M2 2c2 10 3 11 6 11s3-1 6-11" fill="none" stroke="#1a8a2a" stroke-width="1.4"/></svg><svg style="left:852px;top:84px;" width="16" height="16" viewBox="0 0 16 16"><path d="M1.5 1v15M1 2.5h14M1 14.5h14" stroke="#222" stroke-width="1"/><path d="M8.5 3v11" stroke="#000" stroke-dasharray="1 1"/><path d="M2 14c1-6 2-6 3-2s2 2 3-3 2-6 3-6 3 6 4 11" fill="none" stroke="#1a8a2a" stroke-width="1.1"/></svg><svg style="left:875px;top:84px;" width="16" height="16" viewBox="0 0 16 16"><path d="M1.5 1v15M1 2.5h14M1 14.5h14" stroke="#222" stroke-width="1"/><path d="M8.5 3v11" stroke="#000" stroke-dasharray="1 1"/><path d="M2 8c1-6 2-6 3-2s2 4 3 4 1-6 3-8 2 6 4 7" fill="none" stroke="#1a8a2a" stroke-width="1.1"/></svg><svg style="left:898px;top:84px;" width="16" height="16" viewBox="0 0 16 16"><path d="M1.5 1v15M1 2.5h14M1 14.5h14" stroke="#222" stroke-width="1"/><path d="M8.5 3v11" stroke="#000" stroke-dasharray="1 1"/><path d="M2 14L15 2" fill="none" stroke="#1a8a2a" stroke-width="1.1"/></svg><svg style="left:921px;top:84px;" width="16" height="16" viewBox="0 0 16 16"><path d="M1.5 1v15M1 2.5h14M1 14.5h14" stroke="#222" stroke-width="1"/><path d="M8.5 3v11" stroke="#000" stroke-dasharray="1 1"/><path d="M2 13c3-9 7-9 12-2M2 3c4 0 7 8 12 6" fill="none" stroke="#1a8a2a" stroke-width="1"/></svg><svg style="left:944px;top:84px;" width="16" height="16" viewBox="0 0 16 16"><path d="M1.5 1v15M1 2.5h14M1 14.5h14" stroke="#222" stroke-width="1"/><path d="M8.5 3v11" stroke="#000" stroke-dasharray="1 1"/><path d="M2 3c4 6 6 8 12 0M2 13c4-4 7-6 12 0" fill="none" stroke="#1a8a2a" stroke-width="1"/></svg><svg style="left:967px;top:84px;" width="16" height="16" viewBox="0 0 16 16"><path d="M1.5 1v15M1 2.5h14M1 14.5h14" stroke="#222" stroke-width="1"/><path d="M8.5 3v11" stroke="#000" stroke-dasharray="1 1"/><path d="M2 3c5 3 7 3 12 0M2 6c5 3 7 3 12 0M2 9c5 3 7 3 12 0" fill="none" stroke="#1a8a2a" stroke-width="1.1"/><path d="M6 11h6l-3 3z" fill="#111"/></svg><svg style="left:990px;top:84px;" width="16" height="16" viewBox="0 0 16 16"><path d="M1.5 1v15M1 2.5h14M1 14.5h14" stroke="#222" stroke-width="1"/><path d="M8.5 3v11" stroke="#000" stroke-dasharray="1 1"/><path d="M2 7c5-3 7-3 12 0M2 10c5-3 7-3 12 0M2 13c5-3 7-3 12 0" fill="none" stroke="#1a8a2a" stroke-width="1.1"/><path d="M6 5h6l-3-3z" fill="#111"/></svg><div style="left:1012px;top:82px;width:1px;height:20px;background:#a8a8a8"></div><div style="left:1013px;top:82px;width:1px;height:20px;background:#ffffff"></div><svg style="left:1018px;top:84px;" width="16" height="16" viewBox="0 0 16 16"><rect x="0.5" y="1.5" width="9" height="11" fill="#e8c870" stroke="#9a7a30"/><rect x="3" y="0.5" width="4" height="2" fill="#fff" stroke="#9a7a30"/><rect x="6.5" y="7.5" width="9" height="8" fill="#fff" stroke="#3a5aa0"/><path d="M8 12l1-2 1 2 1-2 1 2 1-2 1 2" fill="none" stroke="#333" stroke-width="0.8"/></svg><svg style="left:1041px;top:90px;" width="8" height="5" viewBox="0 0 8 5"><path d="M0 0h8L4 4.5z" fill="#111"/></svg><div style="left:1055px;top:82px;width:1px;height:20px;background:#a8a8a8"></div><div style="left:1056px;top:82px;width:1px;height:20px;background:#ffffff"></div><svg style="left:1061px;top:84px;" width="16" height="16" viewBox="0 0 16 16"><rect x="1.5" y="1.5" width="12" height="13" fill="#fff" stroke="#3a5aa0"/><rect x="2" y="2" width="11" height="2" fill="#6a8ad0"/><path d="M4 6.5h7M4 8.5h7M4 10.5h7M4 12.5h7" stroke="#556"/></svg><div style="left:1083px;top:82px;width:1px;height:20px;background:#a8a8a8"></div><div style="left:1084px;top:82px;width:1px;height:20px;background:#ffffff"></div><svg style="left:1089px;top:84px;" width="16" height="16" viewBox="0 0 16 16"><rect x="1.5" y="1.5" width="9" height="10" fill="#e8c870" stroke="#9a7a30"/><rect x="4.5" y="7.5" width="11" height="8" fill="#fff" stroke="#333"/><text x="10" y="14" font-size="6" text-anchor="middle" font-family="Liberation Sans" fill="#222">123</text></svg><div style="left:1111px;top:82px;width:1px;height:20px;background:#a8a8a8"></div><div style="left:1112px;top:82px;width:1px;height:20px;background:#ffffff"></div><div style="left:1115px;top:80px;width:22px;height:24px;background:#f8f8f8;border-top:1px solid #a0a0a0;border-left:1px solid #a0a0a0;border-right:1px solid #fff;border-bottom:1px solid #fff;box-sizing:border-box"></div><div style="left:1137px;top:80px;width:22px;height:24px;background:#f8f8f8;border-top:1px solid #a0a0a0;border-left:1px solid #a0a0a0;border-right:1px solid #fff;border-bottom:1px solid #fff;box-sizing:border-box"></div><svg style="left:1118px;top:84px;" width="16" height="16" viewBox="0 0 16 16"><rect x="3.5" y="3.5" width="9" height="9" fill="#d8f0f0" stroke="#555"/><path d="M4 11l2-3 2 2 3-4" fill="none" stroke="#d04060"/><path d="M0 1.5h16M0 14.5h16" stroke="#111" stroke-width="1.3"/><path d="M0 1.5l2-1.5v3zM16 1.5l-2-1.5v3zM0 14.5l2-1.5v3zM16 14.5l-2-1.5v3z" fill="#111"/><path d="M0 8h3M13 8h3" stroke="#111"/></svg><svg style="left:1140px;top:84px;" width="16" height="16" viewBox="0 0 16 16"><rect x="3.5" y="3.5" width="9" height="9" fill="#d8f0f0" stroke="#555"/><path d="M4 11l2-3 2 2 3-4" fill="none" stroke="#d04060"/><path d="M1.5 0v16M14.5 0v16" stroke="#111" stroke-width="1.3"/><path d="M1.5 0l-1.5 2h3zM1.5 16l-1.5-2h3zM14.5 0l-1.5 2h3zM14.5 16l-1.5-2h3z" fill="#111"/><path d="M8 0v3M8 13v3" stroke="#111"/></svg><div style="left:1162px;top:82px;width:1px;height:20px;background:#a8a8a8"></div><div style="left:1163px;top:82px;width:1px;height:20px;background:#ffffff"></div><svg style="left:1168px;top:84px;" width="16" height="16" viewBox="0 0 16 16"><circle cx="6.5" cy="6.5" r="5.5" fill="#dde8f8" stroke="#7a8aa0" stroke-width="1.2"/><path d="M3.5 6.5h6M6.5 3.5v6" stroke="#2a5ab0" stroke-width="2"/><path d="M10.5 10.5l4 4" stroke="#c8b060" stroke-width="3"/></svg><svg style="left:1190px;top:84px;" width="16" height="16" viewBox="0 0 16 16"><circle cx="6.5" cy="6.5" r="5.5" fill="#dde8f8" stroke="#7a8aa0" stroke-width="1.2"/><path d="M3.5 6.5h6" stroke="#2a5ab0" stroke-width="2"/><path d="M10.5 10.5l4 4" stroke="#c8b060" stroke-width="3"/></svg><svg style="left:1214px;top:84px;" width="16" height="16" viewBox="0 0 16 16"><rect x="5.5" y="0.5" width="10" height="7" fill="#fff" stroke="#333"/><text x="10.5" y="6.3" font-size="5.5" text-anchor="middle" font-family="Liberation Sans" fill="#111">100</text><circle cx="5" cy="10" r="3.5" fill="#eef" stroke="#888"/><path d="M7.5 12.5l3 3" stroke="#e09040" stroke-width="2"/></svg><div style="left:1236px;top:82px;width:1px;height:20px;background:#a8a8a8"></div><div style="left:1237px;top:82px;width:1px;height:20px;background:#ffffff"></div><svg style="left:1242px;top:84px;" width="16" height="16" viewBox="0 0 16 16"><path d="M1 2h4v4H1zM6 2h4v4H6zM11 2h4v4h-4zM1 8h4v4H1zM6 8h4v4H6z" fill="#a0a0a0"/><path d="M11 8h4v4h-4z" fill="#d8d8d8"/></svg><svg style="left:1265px;top:90px;" width="8" height="5" viewBox="0 0 8 5"><path d="M0 0h8L4 4.5z" fill="#aaa"/></svg><svg style="left:1280px;top:84px;" width="16" height="16" viewBox="0 0 16 16"><text x="8" y="14" font-size="15" font-weight="bold" text-anchor="middle" font-family="Liberation Serif" fill="#2a3a7a">A</text></svg><svg style="left:1302px;top:84px;" width="16" height="16" viewBox="0 0 16 16"><text x="6" y="12" font-size="13" text-anchor="middle" font-family="Liberation Sans" fill="#3a6ac0">A</text><rect x="10" y="1" width="4" height="4" fill="#fff" stroke="#3a6ac0"/><path d="M10 12l4-5" stroke="#e8e040" stroke-width="2"/><path d="M2 15l3-3 3 3z" fill="#5a8ad8"/></svg><svg style="left:1326px;top:90px;" width="8" height="5" viewBox="0 0 8 5"><path d="M0 0h8L4 4.5z" fill="#111"/></svg><div style="left:1340px;top:82px;width:1px;height:20px;background:#a8a8a8"></div><div style="left:1341px;top:82px;width:1px;height:20px;background:#ffffff"></div><svg style="left:1346px;top:84px;" width="16" height="16" viewBox="0 0 16 16"><path d="M1 5l3-3h5v3h6v10H1z" fill="#c8c8c8" stroke="#aaa"/></svg><div style="left:1368px;top:82px;width:1px;height:20px;background:#a8a8a8"></div><div style="left:1369px;top:82px;width:1px;height:20px;background:#ffffff"></div><svg style="left:1374px;top:84px;" width="16" height="16" viewBox="0 0 16 16"><rect x="1" y="1" width="9" height="9" fill="#ccc" stroke="#aaa"/><rect x="6" y="6" width="9" height="9" fill="#bbb" stroke="#999"/></svg><svg style="left:1397px;top:84px;" width="16" height="16" viewBox="0 0 16 16"><rect x="1" y="1" width="9" height="9" fill="#d8d8d8" stroke="#aaa"/><rect x="6" y="6" width="9" height="9" fill="#c8c8c8" stroke="#999"/></svg><div style="left:1419px;top:82px;width:1px;height:20px;background:#a8a8a8"></div><div style="left:1420px;top:82px;width:1px;height:20px;background:#ffffff"></div><svg style="left:1425px;top:84px;" width="16" height="16" viewBox="0 0 16 16"><path d="M2 1v14" stroke="#444" stroke-width="2"/><path d="M4 3h8v3H4zM4 9h10v3H4z" fill="none" stroke="#888"/></svg><svg style="left:1448px;top:84px;" width="16" height="16" viewBox="0 0 16 16"><path d="M8 1v14" stroke="#444" stroke-width="1.5" stroke-dasharray="2 2"/><path d="M3 4h10v3H3zM4 9h8v3H4z" fill="#f4f4f4" stroke="#888"/></svg><svg style="left:1471px;top:84px;" width="16" height="16" viewBox="0 0 16 16"><path d="M14 1v14" stroke="#444" stroke-width="2"/><path d="M4 3h8v3H4zM2 9h10v3H2z" fill="none" stroke="#888"/></svg><svg style="left:1494px;top:84px;" width="16" height="16" viewBox="0 0 16 16"><path d="M1 2h14" stroke="#444" stroke-width="2"/><path d="M3 4h3v9H3zM8 4h3v6H8z" fill="none" stroke="#888"/><path d="M13 12V5" stroke="#444"/></svg><svg style="left:1517px;top:84px;" width="16" height="16" viewBox="0 0 16 16"><path d="M1 8h14" stroke="#444" stroke-width="1.5" stroke-dasharray="2 2"/><path d="M4 3h3v10H4zM9 5h3v6H9z" fill="#f4f4f4" stroke="#888"/></svg><svg style="left:1540px;top:84px;" width="16" height="16" viewBox="0 0 16 16"><path d="M1 14h14" stroke="#444" stroke-width="2"/><path d="M3 5h3v7H3zM8 3h3v9H8z" fill="none" stroke="#888"/><path d="M13 4v7" stroke="#444"/></svg><div style="left:0px;top:108px;width:1px;height:834px;background:#9a9a9a"></div><div style="left:2px;top:108px;width:2px;height:834px;background:#e4e4e4"></div><div style="left:4px;top:108px;width:1px;height:804px;background:#a8a8a8"></div><div style="left:5px;top:108px;width:1905px;height:1px;background:#5a5a5a"></div><div style="left:5px;top:108px;width:1px;height:804px;background:#5a5a5a"></div><div style="left:6px;top:109px;width:1904px;height:803px;background:#fff"></div><div class="t" style="left:566px;width:800px;text-align:center;top:114.61px;font-size:14.4px;color:#181880;font-weight:normal;">UC3842_teszt2.cir</div><div class="t" style="right:1856.5px;text-align:right;top:122.81px;font-size:14.4px;color:#181880;font-weight:normal;">54.20</div><div class="t" style="right:1856.5px;text-align:right;top:416.81px;font-size:14.4px;color:#181880;font-weight:normal;">0.00</div><div class="t" style="right:1856.5px;text-align:right;top:777.51px;font-size:14.4px;color:#181880;font-weight:normal;">-66.36</div><div class="t" style="left:56px;top:786.51px;font-size:14.4px;color:#181880;font-weight:normal;">664.46u</div><div class="t" style="left:595px;width:800px;text-align:center;top:786.51px;font-size:14.4px;color:#181880;font-weight:normal;">800.00u</div><div class="t" style="right:8.5px;text-align:right;top:786.51px;font-size:14.4px;color:#181880;font-weight:normal;">927.15u</div><svg style="left:0px;top:0px;pointer-events:none" width="1910" height="1039" viewBox="0 0 1910 1039"><rect x="56.5" y="130.5" width="1820" height="655" fill="none" stroke="#686868" stroke-width="1"/><path d="M995.5 131V785" stroke="#505050" stroke-dasharray="3 3"/><path d="M1133.5 131V785" stroke="#000" stroke-dasharray="3 3"/><path d="M57 424.5H1876" stroke="#707070" stroke-dasharray="3 3"/><polyline points="56.5,428.5 100.5,425.5 150.5,423.5 190.5,423.5 230.5,424.5 1876,424.5" fill="none" stroke="#b02818" stroke-width="1"/><polyline points="56.5,432.5 98.5,425.5 149.5,418.5 167.5,416.0 180.5,416.0 191.5,419.5 211.5,429.5 233.5,426.5 265.5,421.5 279.5,420.5 295.5,428.0 307.5,426.5 340.5,424.5 458.5,424.5 466.5,423.5 476.5,421.5 484.5,420.5 490.5,419.5 496.5,420.5 504.5,424.5 512.5,427.5 522.5,426.5 530.5,424.5 671.5,424.5 679.5,423.5 689.5,421.5 697.5,420.5 703.5,419.5 709.5,420.5 717.5,424.5 725.5,427.5 735.5,426.5 743.5,424.5 882.5,424.5 890.5,423.5 900.5,421.5 908.5,420.5 914.5,419.5 920.5,420.5 928.5,424.5 936.5,427.5 946.5,426.5 954.5,424.5 1095.5,424.5 1103.5,423.5 1113.5,421.5 1121.5,420.5 1127.5,419.5 1133.5,420.5 1141.5,424.5 1149.5,427.5 1159.5,426.5 1167.5,424.5 1307.5,424.5 1315.5,423.5 1325.5,421.5 1333.5,420.5 1339.5,419.5 1345.5,420.5 1353.5,424.5 1361.5,427.5 1371.5,426.5 1379.5,424.5 1521.5,424.5 1529.5,423.5 1539.5,421.5 1547.5,420.5 1553.5,419.5 1559.5,420.5 1567.5,424.5 1575.5,427.5 1585.5,426.5 1593.5,424.5 1724.5,424.5 1732.5,423.5 1742.5,421.5 1750.5,420.5 1756.5,419.5 1762.5,420.5 1770.5,424.5 1778.5,427.5 1788.5,426.5 1796.5,424.5 1876.5,424.5" fill="none" stroke="#1a6a2a" stroke-width="1"/><path d="M330 425.5h15M361 425.5h15M392 425.5h15M423 425.5h15M454 425.5h15M485 425.5h15M516 425.5h15M547 425.5h15M578 425.5h15M609 425.5h15M640 425.5h15M671 425.5h15M702 425.5h15M733 425.5h15M764 425.5h15M795 425.5h15M826 425.5h15M857 425.5h15M888 425.5h15M919 425.5h15M950 425.5h15M981 425.5h15M1012 425.5h15M1043 425.5h15M1074 425.5h15M1105 425.5h15M1136 425.5h15M1167 425.5h15M1198 425.5h15M1229 425.5h15M1260 425.5h15M1291 425.5h15M1322 425.5h15M1353 425.5h15M1384 425.5h15M1415 425.5h15M1446 425.5h15M1477 425.5h15M1508 425.5h15M1539 425.5h15M1570 425.5h15M1601 425.5h15M1632 425.5h15M1663 425.5h15M1694 425.5h15M1725 425.5h15M1756 425.5h15M1787 425.5h15M1818 425.5h15M1849 425.5h15" stroke="#9a2a10" stroke-width="1.2"/><path d="M57 419.5H1876" stroke="#10106a" stroke-width="1"/><rect x="1128.5" y="415.5" width="10" height="10" fill="none" stroke="#111"/></svg><div style="left:1138px;top:404px;width:101px;height:16px;background:#ffff00;border:1px solid #111;box-sizing:border-box"></div><div class="t" style="left:1141.5px;top:406.77px;font-size:10.67px;color:#111;font-weight:normal;">819.910u,889.035m</div><div style="left:1805px;top:403px;width:71px;height:17px;background:#ffff00;border:1px solid #111;box-sizing:border-box"></div><div class="t" style="left:1808.5px;top:405.47px;font-size:10.67px;color:#111;font-weight:normal;">1.000m,1.000</div><div class="t" style="right:1126px;text-align:right;top:802.51px;font-size:14.4px;color:#181880;font-weight:normal;">Left</div><div class="t" style="right:762px;text-align:right;top:802.51px;font-size:14.4px;color:#181880;font-weight:normal;">Right</div><div class="t" style="right:398px;text-align:right;top:802.51px;font-size:14.4px;color:#181880;font-weight:normal;">Delta</div><div class="t" style="right:34px;text-align:right;top:802.51px;font-size:14.4px;color:#181880;font-weight:normal;">Slope</div><div class="t" style="right:1126px;text-align:right;top:818.51px;font-size:14.4px;color:#181880;font-weight:normal;">1.000</div><div class="t" style="right:762px;text-align:right;top:818.51px;font-size:14.4px;color:#181880;font-weight:normal;">1.000</div><div class="t" style="right:398px;text-align:right;top:818.51px;font-size:14.4px;color:#181880;font-weight:normal;">0.000</div><div class="t" style="right:34px;text-align:right;top:818.51px;font-size:14.4px;color:#181880;font-weight:normal;">0.000</div><div class="t" style="right:1126px;text-align:right;top:834.51px;font-size:14.4px;color:#c42a2a;font-weight:normal;">120.963m</div><div class="t" style="right:762px;text-align:right;top:834.51px;font-size:14.4px;color:#c42a2a;font-weight:normal;">46.464m</div><div class="t" style="right:398px;text-align:right;top:834.51px;font-size:14.4px;color:#c42a2a;font-weight:normal;">-74.499m</div><div class="t" style="right:34px;text-align:right;top:834.51px;font-size:14.4px;color:#c42a2a;font-weight:normal;">-413.674</div><div class="t" style="right:1126px;text-align:right;top:850.51px;font-size:14.4px;color:#2a7e2a;font-weight:normal;">889.035m</div><div class="t" style="right:762px;text-align:right;top:850.51px;font-size:14.4px;color:#2a7e2a;font-weight:normal;">495.709m</div><div class="t" style="right:398px;text-align:right;top:850.51px;font-size:14.4px;color:#2a7e2a;font-weight:normal;">-393.326m</div><div class="t" style="right:34px;text-align:right;top:850.51px;font-size:14.4px;color:#2a7e2a;font-weight:normal;">-2.184K</div><div class="t" style="right:1126px;text-align:right;top:866.51px;font-size:14.4px;color:#181880;font-weight:normal;">819.910u</div><div class="t" style="right:762px;text-align:right;top:866.51px;font-size:14.4px;color:#181880;font-weight:normal;">1.000m</div><div class="t" style="right:398px;text-align:right;top:866.51px;font-size:14.4px;color:#181880;font-weight:normal;">180.090u</div><div class="t" style="right:34px;text-align:right;top:866.51px;font-size:14.4px;color:#181880;font-weight:normal;">1.000</div><div style="left:55px;top:819px;width:14px;height:13px;border:1px solid #181880;box-sizing:border-box"></div><div class="t" style="left:57px;top:818.51px;font-size:14.4px;color:#181880;font-weight:normal;">R</div><div class="t" style="left:70px;top:818.51px;font-size:14.4px;color:#181880;font-weight:normal;">v(1) (V)</div><div style="left:70px;top:832px;width:48px;height:1px;background:#181880"></div><div style="left:55px;top:835px;width:14px;height:13px;border:1px solid #c42a2a;box-sizing:border-box"></div><div class="t" style="left:70px;top:834.51px;font-size:14.4px;color:#c42a2a;font-weight:normal;">v(2) (V)</div><div style="left:55px;top:851px;width:14px;height:13px;border:1px solid #2a7e2a;box-sizing:border-box"></div><div class="t" style="left:58px;top:850.51px;font-size:14.4px;color:#2a7e2a;font-weight:normal;">L</div><div class="t" style="left:70px;top:850.51px;font-size:14.4px;color:#2a7e2a;font-weight:normal;">i(I1) (A)</div><div class="t" style="left:70px;top:866.51px;font-size:14.4px;color:#181880;font-weight:normal;">T (Secs)</div><div style="left:6px;top:895px;width:1904px;height:17px;background:#f0f0f0"></div><div style="left:141px;top:895px;width:1755px;height:1px;background:#111"></div><div style="left:1896px;top:893px;width:14px;height:8px;background:#fafafa"></div><div style="left:1896px;top:901px;width:14px;height:1px;background:#606060"></div><svg style="left:6px;top:894px;" width="140" height="20" viewBox="0 0 140 20"><path d="M87 1.5L95 16.5H127L135 1.5" fill="#f2f2f2" stroke="none"/><path d="M87 1.5L95 16.5M127 16.5L135 1.5" fill="none" stroke="#111" stroke-width="1"/><path d="M95 16.5H127" stroke="#c8d4e0" stroke-width="1"/></svg><div style="left:12px;top:895px;width:81px;height:17px;background:#5a5a5a"></div><div style="left:13px;top:896px;width:15px;height:14px;background:#ececec;border-bottom:1px solid #9a9a9a;border-right:1px solid #9a9a9a;box-sizing:border-box"></div><div style="left:29px;top:896px;width:15px;height:14px;background:#ececec;border-bottom:1px solid #9a9a9a;border-right:1px solid #9a9a9a;box-sizing:border-box"></div><div style="left:45px;top:896px;width:15px;height:14px;background:#ececec;border-bottom:1px solid #9a9a9a;border-right:1px solid #9a9a9a;box-sizing:border-box"></div><div style="left:61px;top:896px;width:15px;height:14px;background:#ececec;border-bottom:1px solid #9a9a9a;border-right:1px solid #9a9a9a;box-sizing:border-box"></div><div style="left:77px;top:896px;width:15px;height:14px;background:#ececec;border-bottom:1px solid #9a9a9a;border-right:1px solid #9a9a9a;box-sizing:border-box"></div><svg style="left:13px;top:896px;" width="15" height="14" viewBox="0 0 15 14"><path d="M4.5 7h5l-2.5 3z" fill="#000"/></svg><svg style="left:29px;top:896px;" width="15" height="14" viewBox="0 0 15 14"><path d="M4 3v9" stroke="#000" stroke-width="1.3"/><path d="M10.5 3v9l-6-4.5z" fill="#000"/></svg><svg style="left:45px;top:896px;" width="15" height="14" viewBox="0 0 15 14"><path d="M10.5 3v9l-6-4.5z" fill="#000"/></svg><svg style="left:61px;top:896px;" width="15" height="14" viewBox="0 0 15 14"><path d="M4.5 3v9l6-4.5z" fill="#000"/></svg><svg style="left:77px;top:896px;" width="15" height="14" viewBox="0 0 15 14"><path d="M11 3v9" stroke="#000" stroke-width="1.3"/><path d="M4 3v9l6-4.5z" fill="#000"/></svg><div class="t" style="left:102px;top:896.77px;font-size:11.5px;color:#111;font-weight:bold;">MAIN</div><div style="left:4px;top:912px;width:1906px;height:4px;background:#f8f8f8"></div><div style="left:0px;top:916px;width:1910px;height:29px;background:#f0f0f0"></div><div style="left:0px;top:916px;width:1px;height:26px;background:#9a9a9a"></div><div style="left:2px;top:917px;width:98px;height:1px;background:#808080"></div><div style="left:2px;top:935px;width:98px;height:2px;background:#808080"></div><div style="left:200px;top:917px;width:1710px;height:1px;background:#808080"></div><div style="left:101px;top:914px;width:101px;height:26px;background:#f0f0f0;border-right:2px solid #6e6e6e;border-bottom:2px solid #6e6e6e;border-left:1px solid #fff;box-sizing:border-box;border-radius:0 0 3px 0"></div><div style="left:199px;top:914px;width:3px;height:3px;background:#f8f8f8"></div><div class="t" style="left:8.7px;top:920.39px;font-size:12.3px;color:#111;font-weight:normal;transform:scaleX(0.93);transform-origin:0 0">UC3842_teszt2.cir</div><div class="t" style="left:108px;top:922.19px;font-size:12.3px;color:#111;font-weight:normal;transform:scaleX(0.85);transform-origin:0 0">Transient Analysis</div><div style="left:0px;top:945px;width:1910px;height:1px;background:#a0a0a0"></div><div style="left:0px;top:946px;width:1910px;height:70px;background:#f0f0f0"></div><div style="left:14px;top:950px;width:1896px;height:63px;background:#fff"></div><svg style="left:4px;top:952px;" width="7" height="7" viewBox="0 0 7 7"><path d="M0.5 0.5l6 5.5M6.5 0.5l-6 5.5" stroke="#000" stroke-width="1.5"/></svg><div style="left:5px;top:964px;width:1px;height:49px;background:#a0a0a0"></div><div style="left:9px;top:964px;width:1px;height:49px;background:#a0a0a0"></div><div style="left:5px;top:1012px;width:5px;height:1px;background:#a0a0a0"></div><div style="left:0px;top:1016px;width:1910px;height:1px;background:#a0a0a0"></div><div style="left:0px;top:1017px;width:1910px;height:22px;background:#f0f0f0"></div><div style="left:0px;top:1020px;width:158px;height:19px;border-top:1px solid #a0a0a0;border-right:1px solid #a0a0a0;box-sizing:border-box"></div><div style="left:161px;top:1020px;width:1501px;height:19px;border-top:1px solid #a0a0a0;border-left:1px solid #a0a0a0;border-right:1px solid #a0a0a0;box-sizing:border-box"></div><div style="left:1665px;top:1020px;width:152px;height:19px;border-top:1px solid #a0a0a0;border-left:1px solid #a0a0a0;border-right:1px solid #a0a0a0;box-sizing:border-box"></div><div style="left:1819px;top:1020px;width:91px;height:19px;border-top:1px solid #a0a0a0;border-left:1px solid #a0a0a0;box-sizing:border-box"></div><div class="t" style="left:2.5px;top:1022.93px;font-size:14.5px;color:#111;font-weight:normal;">Cursor Mode</div><div class="t" style="left:163px;top:1022.64px;font-size:14.6px;color:#111;font-weight:normal;">Double-click in the window for more options.</div><div class="t" style="left:1667.5px;top:1022.81px;font-size:14.4px;color:#111;font-weight:normal;">714.977u , 45.546</div>
</body></html>
